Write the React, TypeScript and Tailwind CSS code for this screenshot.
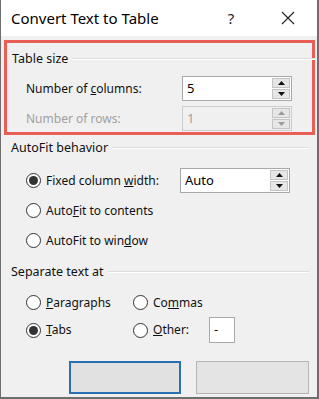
import React from 'react'

const font = { fontFamily: '"Noto Sans", "Open Sans", sans-serif' }

function Radio({ checked }: { checked?: boolean }) {
  return (
    <span className="w-[15px] h-[15px] rounded-full border border-[#333] bg-white flex items-center justify-center shrink-0">
      {checked && <span className="w-[9px] h-[9px] rounded-full bg-[#333]" />}
    </span>
  )
}

function Spin({ value, disabled }: { value: string; disabled?: boolean }) {
  const arrow = disabled ? '#9a9a9a' : '#111'
  return (
    <div
      className={`w-[110px] h-[25px] border flex items-stretch ${
        disabled ? 'border-[#cccccc] bg-[#f0f0f0]' : 'border-[#a8a8a8] bg-white'
      }`}
    >
      <span className={`flex-1 pl-[4px] leading-[23px] text-[13px] ${disabled ? 'text-[#a0a0a0]' : 'text-black'}`}>
        {value}
      </span>
      <div className="w-[19px] flex flex-col gap-[1px] py-[1px] pr-[1px]">
        <div className="flex-1 bg-[#e6e6e6] border border-[#c4c4c4] flex items-center justify-center">
          <svg width="7" height="4" viewBox="0 0 7 4">
            <path d="M0 4 L3.5 0 L7 4 Z" fill={arrow} />
          </svg>
        </div>
        <div className="flex-1 bg-[#e6e6e6] border border-[#c4c4c4] flex items-center justify-center">
          <svg width="7" height="4" viewBox="0 0 7 4">
            <path d="M0 0 L3.5 4 L7 0 Z" fill={arrow} />
          </svg>
        </div>
      </div>
    </div>
  )
}

function GroupTitle({ label }: { label: string }) {
  return (
    <div className="flex items-center gap-[4px] h-[20px]">
      <span className="text-[12.5px] text-[#111] whitespace-nowrap">{label}</span>
      <div className="flex-1 flex flex-col">
        <div className="h-px bg-[#dcdcdc]" />
        <div className="h-px bg-white" />
      </div>
    </div>
  )
}

export default function App() {
  return (
    <div
      className="w-[319px] h-[399px] bg-[#f0f0f0] border-l border-r-2 border-b-2 border-[#6e6e6e] overflow-hidden relative text-[12px] text-[#111]"
      style={font}
    >
      {/* Title bar */}
      <div className="h-[36px] bg-white flex items-center pl-[10px]">
        <span className="text-[15px] text-black">Convert Text to Table</span>
        <div className="flex-1" />
        <span className="text-[15px] text-[#222] w-[20px] text-center">?</span>
        <div className="w-[40px]" />
        <svg width="14" height="14" viewBox="0 0 14 14" className="mr-[22px]">
          <path d="M1 1 L13 13 M13 1 L1 13" stroke="#222" strokeWidth="1.1" />
        </svg>
      </div>

      {/* Table size (highlighted) */}
      <div className="mt-[4px] ml-[3px] w-[311px] h-[95px] border-[3px] border-[#ea5f55] pl-[5px] pr-[3px] pt-[6px]">
        <div className="-mr-[6px]">
          <GroupTitle label="Table size" />
        </div>
        <div className="flex items-center h-[25px] mt-[7px] pl-[14px]">
          <span className="w-[156px]">
            Number of <u>c</u>olumns:
          </span>
          <Spin value="5" />
        </div>
        <div className="flex items-center h-[25px] mt-[5px] pl-[14px]">
          <span className="w-[156px] text-[#a0a0a0]">Number of rows:</span>
          <Spin value="1" disabled />
        </div>
      </div>

      {/* AutoFit behavior */}
      <div className="pl-[10px] pr-[8px] mt-[3px]">
        <GroupTitle label="AutoFit behavior" />
        <div className="pl-[15px] mt-[10px] flex flex-col">
          <div className="flex items-center h-[25px]">
            <Radio checked />
            <span className="ml-[5px] w-[134px]">
              Fixed column <u>w</u>idth:
            </span>
            <Spin value="Auto" />
          </div>
          <div className="flex items-center h-[25px] mt-[5px]">
            <Radio />
            <span className="ml-[5px]">
              Auto<u>F</u>it to contents
            </span>
          </div>
          <div className="flex items-center h-[25px] mt-[5px]">
            <Radio />
            <span className="ml-[5px]">
              AutoFit to win<u>d</u>ow
            </span>
          </div>
        </div>
      </div>

      {/* Separate text at */}
      <div className="pl-[10px] pr-[8px] mt-[9px]">
        <GroupTitle label="Separate text at" />
        <div className="pl-[15px] mt-[8px] flex flex-col">
          <div className="flex items-center h-[25px]">
            <div className="flex items-center w-[107px]">
              <Radio />
              <span className="ml-[5px]">
                <u>P</u>aragraphs
              </span>
            </div>
            <Radio />
            <span className="ml-[5px]">
              Co<u>m</u>mas
            </span>
          </div>
          <div className="flex items-center h-[26px] mt-[2px]">
            <div className="flex items-center w-[107px]">
              <Radio checked />
              <span className="ml-[5px]">
                <u>T</u>abs
              </span>
            </div>
            <Radio />
            <span className="ml-[5px] w-[56px]">
              <u>O</u>ther:
            </span>
            <div className="w-[26px] h-[26px] bg-white border border-[#a8a8a8] pl-[4px] leading-[22px] text-[13px]">
              -
            </div>
          </div>
        </div>
      </div>

      {/* Buttons */}
      <div className="flex mt-[18px] pl-[68px] gap-[15px]">
        <div className="w-[112px] h-[33px] border-2 border-[#2a6fb0] bg-[#e1e1e1]" />
        <div className="w-[113px] h-[33px] border border-[#b5b5b5] bg-[#e4e4e4]" />
      </div>
    </div>
  )
}
